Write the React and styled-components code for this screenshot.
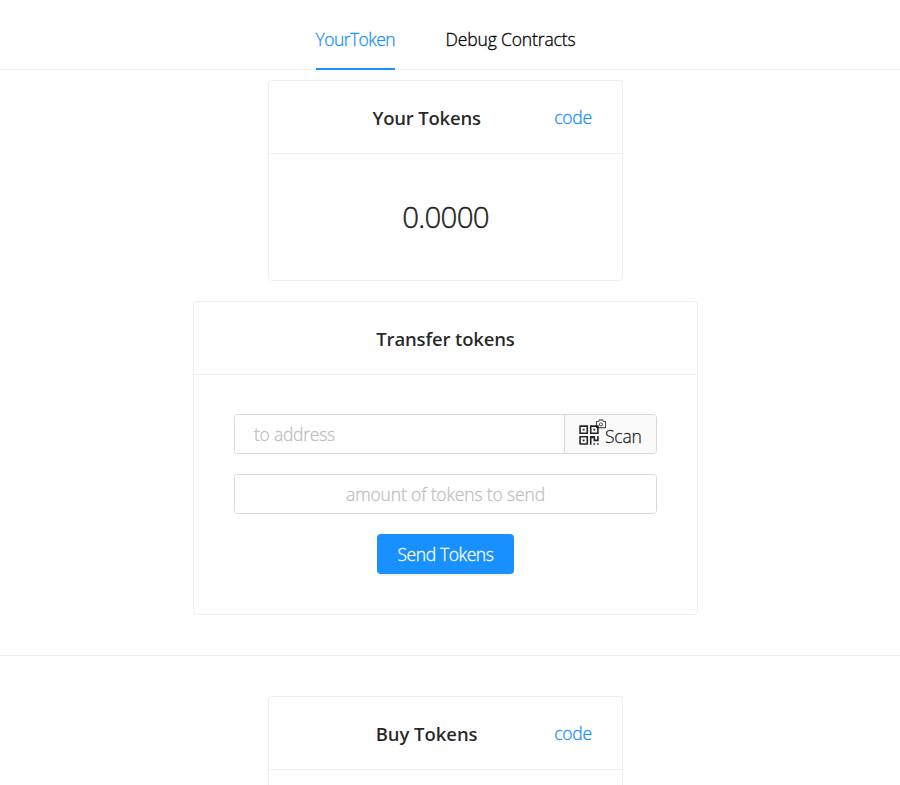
import React, { useState } from "react";
import styled, { createGlobalStyle } from "styled-components";
import { AiOutlineCamera, AiOutlineQrcode } from "react-icons/ai";

const GlobalStyle = createGlobalStyle`
  *, *::before, *::after {
    box-sizing: border-box;
  }

  body {
    margin: 0;
    height: 785px;
    overflow: hidden;
    background: #fff;
    color: rgba(0, 0, 0, 0.85);
    font-family: "Open Sans", "Noto Sans", sans-serif;
    font-size: 17.5px;
    font-weight: 300;
    line-height: 28px;
    -webkit-text-stroke: 0.3px;
  }

  input, button {
    font: inherit;
  }
`;

const Page = styled.div`
  display: flex;
  flex-direction: column;
  height: 785px;
  overflow: hidden;
`;

const TabBar = styled.nav`
  display: flex;
  flex-shrink: 0;
  justify-content: center;
  gap: 51px;
  height: 70px;
  padding-right: 9px;
  border-bottom: 1px solid #f0f0f0;
`;

const Tab = styled.button`
  width: ${(props) => props.$width}px;
  height: 70px;
  padding: 10px 0 0;
  border: 0;
  border-bottom: 2px solid
    ${(props) => (props.$active ? "#1890ff" : "transparent")};
  background: none;
  color: ${(props) => (props.$active ? "#1890ff" : "#000")};
  letter-spacing: ${(props) => props.$spacing || 0}px;
  white-space: nowrap;
  cursor: pointer;
`;

const Section = styled.section`
  display: flex;
  flex-shrink: 0;
  flex-direction: column;
  align-items: center;
  gap: 20px;
  padding: ${(props) => props.$top}px 9px 40px 0;
`;

const Divider = styled.hr`
  flex-shrink: 0;
  width: 100%;
  height: 1px;
  margin: 0;
  border: 0;
  background: #f0f0f0;
`;

const Card = styled.div`
  width: ${(props) => props.$width}px;
  border: 1px solid #f0f0f0;
  border-radius: 4px;
  background: #fff;
`;

const CardHead = styled.div`
  display: flex;
  align-items: center;
  height: 73px;
  padding: 0 30px;
  border-bottom: 1px solid #f0f0f0;
`;

const CardTitle = styled.h2`
  flex: 1;
  margin: 0;
  padding-top: 2px;
  font-size: 18.5px;
  font-weight: 600;
  text-align: center;
  letter-spacing: ${(props) => props.$spacing || 0}px;
  -webkit-text-stroke: 0;
`;

const CodeLink = styled.a`
  color: #1890ff;
  letter-spacing: -0.2px;
  text-decoration: none;
`;

const Balance = styled.div`
  display: flex;
  align-items: center;
  justify-content: center;
  height: 126px;
  font-size: 29.5px;
  letter-spacing: -0.8px;
  -webkit-text-stroke: 0.5px;
`;

const Form = styled.div`
  display: flex;
  flex-direction: column;
  align-items: center;
  gap: 20px;
  padding: 39px 40px 40px;
`;

const InputGroup = styled.div`
  display: flex;
  width: 100%;
  height: 40px;
  border: 1px solid #d9d9d9;
  border-radius: 4px;
  overflow: hidden;
`;

const Input = styled.input`
  flex: 1;
  min-width: 0;
  padding: 0 19px;
  border: 0;
  outline: 0;
  background: #fff;
  text-align: ${(props) => props.$align || "left"};
  letter-spacing: ${(props) => props.$spacing || 0}px;

  &::placeholder {
    color: #bfbfbf;
    opacity: 1;
  }
`;

const ScanAddon = styled.div`
  display: flex;
  align-items: center;
  width: 92px;
  padding-left: 11px;
  border-left: 1px solid #d9d9d9;
  background: #fafafa;
  cursor: pointer;
`;

const ScanIcon = styled.span`
  position: relative;
  display: flex;
  width: 29px;
  padding-top: 2px;
  font-size: 26px;
`;

const CameraBadge = styled.span`
  position: absolute;
  top: -2px;
  left: 19px;
  display: flex;
  font-size: 12px;
`;

const ScanLabel = styled.span`
  padding-top: 4px;
  letter-spacing: -0.2px;
`;

const SendButton = styled.button`
  width: 137px;
  height: 40px;
  padding: 0;
  border: 0;
  border-radius: 4px;
  background: #1890ff;
  box-shadow: 0 2px 0 rgba(0, 0, 0, 0.045);
  color: #fff;
  white-space: nowrap;
  letter-spacing: -0.4px;
  cursor: pointer;
`;

const CardRest = styled.div`
  height: 126px;
`;

export default function App() {
  const [tab, setTab] = useState("token");
  const [address, setAddress] = useState("");
  const [amount, setAmount] = useState("");

  return (
    <>
      <GlobalStyle />
      <Page>
        <TabBar>
          <Tab
            $width={79}
            $spacing={-0.55}
            $active={tab === "token"}
            onClick={() => setTab("token")}
          >
            YourToken
          </Tab>
          <Tab
            $width={130}
            $spacing={-0.15}
            $active={tab === "debug"}
            onClick={() => setTab("debug")}
          >
            Debug Contracts
          </Tab>
        </TabBar>

        <Section $top={10}>
          <Card $width={355}>
            <CardHead>
              <CardTitle $spacing={-0.2}>Your Tokens</CardTitle>
              <CodeLink href="#">code</CodeLink>
            </CardHead>
            <Balance>0.0000</Balance>
          </Card>

          <Card $width={505}>
            <CardHead>
              <CardTitle $spacing={-0.15}>Transfer tokens</CardTitle>
            </CardHead>
            <Form>
              <InputGroup>
                <Input
                  $spacing={-0.25}
                  placeholder="to address"
                  value={address}
                  onChange={(e) => setAddress(e.target.value)}
                />
                <ScanAddon>
                  <ScanIcon>
                    <AiOutlineQrcode />
                    <CameraBadge>
                      <AiOutlineCamera />
                    </CameraBadge>
                  </ScanIcon>
                  <ScanLabel>Scan</ScanLabel>
                </ScanAddon>
              </InputGroup>
              <InputGroup>
                <Input
                  $align="center"
                  $spacing={-0.15}
                  placeholder="amount of tokens to send"
                  value={amount}
                  onChange={(e) => setAmount(e.target.value)}
                />
              </InputGroup>
              <SendButton>Send Tokens</SendButton>
            </Form>
          </Card>
        </Section>

        <Divider />

        <Section $top={40}>
          <Card $width={355}>
            <CardHead>
              <CardTitle $spacing={-0.05}>Buy Tokens</CardTitle>
              <CodeLink href="#">code</CodeLink>
            </CardHead>
            <CardRest />
          </Card>
        </Section>
      </Page>
    </>
  );
}
